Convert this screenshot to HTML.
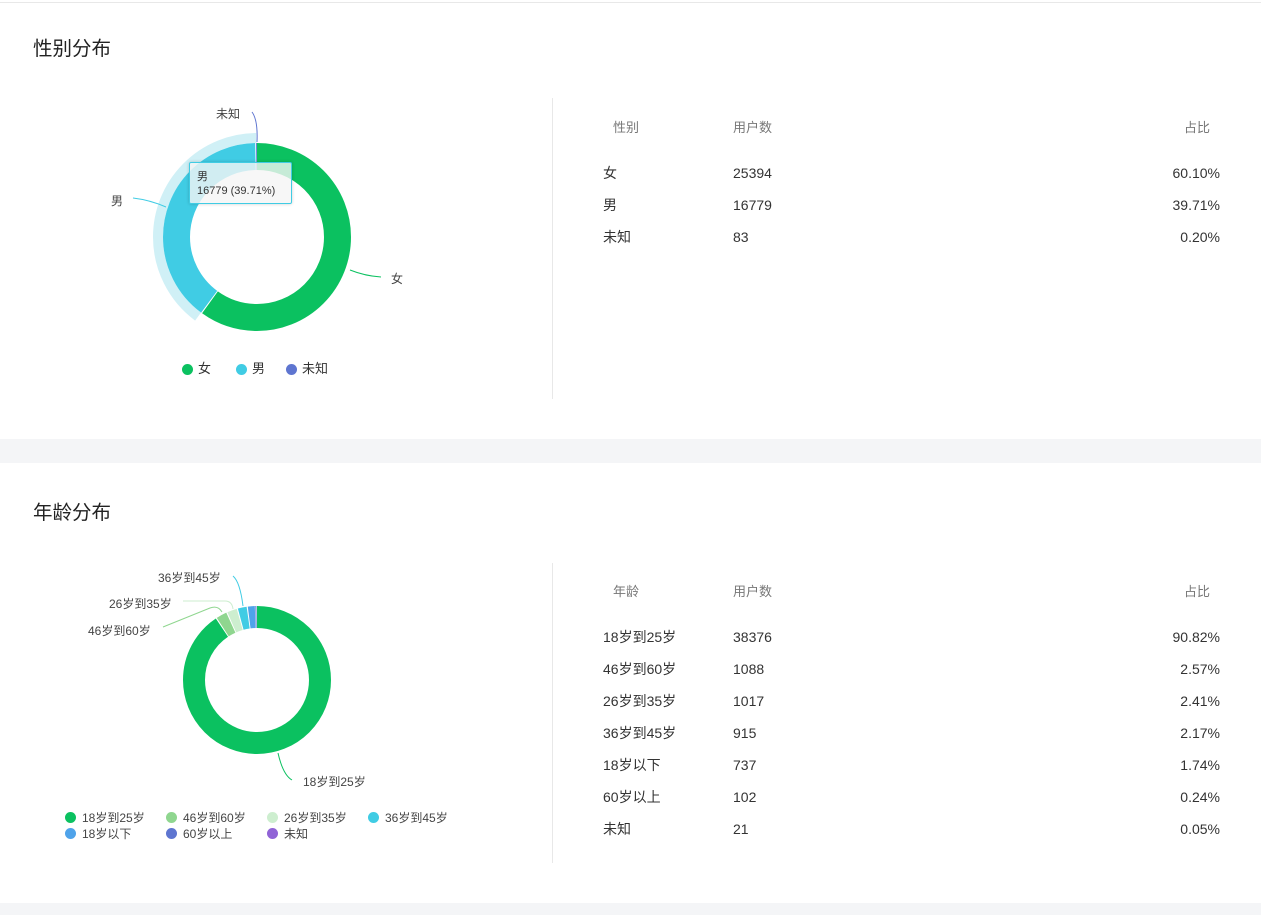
<!DOCTYPE html>
<html><head><meta charset="utf-8"><style>
*{margin:0;padding:0;box-sizing:border-box}
body{width:1261px;height:915px;background:#fff;position:relative;overflow:hidden;font-family:"Liberation Sans","Noto Sans CJK SC",sans-serif;color:#333}
.a{position:absolute;white-space:nowrap;line-height:16px}
.t{font-size:19.5px;color:#222;line-height:22px}
.h{font-size:13px;color:#777}
.d{font-size:14px;color:#333}
.r{text-align:right;width:100px}
.l{font-size:12px;color:#444}
.dot{position:absolute;width:11px;height:11px;border-radius:50%}
</style></head><body>
<div style="position:absolute;left:0;top:2px;width:1261px;height:1px;background:#e8e8e8"></div>
<div style="position:absolute;left:0;top:439px;width:1261px;height:24px;background:#f4f5f7"></div>
<div style="position:absolute;left:0;top:903px;width:1261px;height:12px;background:#f4f5f7"></div>
<div style="position:absolute;left:552px;top:98px;width:1px;height:301px;background:#e8e8e8"></div>
<div style="position:absolute;left:552px;top:563px;width:1px;height:300px;background:#e8e8e8"></div>

<div class="a t" style="left:33px;top:38px">性别分布</div>
<div class="a t" style="left:33px;top:502px">年龄分布</div>

<svg style="position:absolute;left:0;top:0" width="560" height="900">
 <g transform="rotate(-90 257 237)">
  <circle cx="257" cy="237" r="99" fill="none" stroke="#d0f0f6" stroke-width="10" stroke-dasharray="247 622" stroke-dashoffset="-374"/>
  <circle cx="257" cy="237" r="80.5" fill="none" stroke="#0bc160" stroke-width="27" stroke-dasharray="303 505.8"/>
  <circle cx="257" cy="237" r="80.5" fill="none" stroke="#40cce4" stroke-width="27" stroke-dasharray="200 505.8" stroke-dashoffset="-304"/>
  <circle cx="257" cy="237" r="80.5" fill="none" stroke="#5e75d0" stroke-width="27" stroke-dasharray="1 505.8" stroke-dashoffset="-504.8"/>
 </g>
 <path d="M350 270 Q365 276 381 277" stroke="#0bc160" fill="none"/>
 <path d="M166 207 Q150 200 133 198" stroke="#40cce4" fill="none"/>
 <path d="M257 142 Q258 120 252 112" stroke="#5e75d0" fill="none"/>
 <g transform="rotate(-90 257 680)" fill="none" stroke-width="22">
  <circle cx="257" cy="680" r="63" stroke="#0bc160" stroke-dasharray="358.5 395.84"/>
  <circle cx="257" cy="680" r="63" stroke="#8fd68f" stroke-dasharray="9.2 395.84" stroke-dashoffset="-359.5"/>
  <circle cx="257" cy="680" r="63" stroke="#cdeecf" stroke-dasharray="8.5 395.84" stroke-dashoffset="-369.7"/>
  <circle cx="257" cy="680" r="63" stroke="#40cce4" stroke-dasharray="7.6 395.84" stroke-dashoffset="-379.2"/>
  <circle cx="257" cy="680" r="63" stroke="#4fa3ea" stroke-dasharray="6 395.84" stroke-dashoffset="-387.8"/>
  <circle cx="257" cy="680" r="63" stroke="#5e75d0" stroke-dasharray="1 395.84" stroke-dashoffset="-394.2"/>
 </g>
 <path d="M278 753 Q283 775 292 780" stroke="#0bc160" fill="none"/>
 <path d="M222 612 Q218 605 210 608 L163 627" stroke="#8fd68f" fill="none"/>
 <path d="M233 609 Q232 601 225 601 L183 601" stroke="#cdeecf" fill="none"/>
 <path d="M243 606 Q240 582 233 576" stroke="#40cce4" fill="none"/>
</svg>

<div style="position:absolute;left:189px;top:162px;width:103px;height:42px;background:rgba(245,245,245,0.8);border:1px solid #40cce4;border-radius:2px;box-shadow:0 0 3px rgba(0,0,0,.2)"></div>
<div class="a" style="left:197px;top:170px;font-size:11px;line-height:14px;color:#333">男<br>16779 (39.71%)</div>

<div class="a l" style="left:391px;top:271px">女</div>
<div class="a l" style="left:111px;top:193px">男</div>
<div class="a l" style="left:216px;top:106px">未知</div>

<div class="dot" style="left:182px;top:364px;background:#0bc160"></div><div class="a d" style="left:198px;top:361px;font-size:13px">女</div>
<div class="dot" style="left:236px;top:364px;background:#40cce4"></div><div class="a d" style="left:252px;top:361px;font-size:13px">男</div>
<div class="dot" style="left:286px;top:364px;background:#5e75d0"></div><div class="a d" style="left:302px;top:361px;font-size:13px">未知</div>

<div class="a l" style="left:303px;top:774px">18岁到25岁</div>
<div class="a l" style="left:88px;top:623px">46岁到60岁</div>
<div class="a l" style="left:109px;top:596px">26岁到35岁</div>
<div class="a l" style="left:158px;top:570px">36岁到45岁</div>

<div class="dot" style="left:65px;top:812px;background:#0bc160"></div><div class="a l" style="left:82px;top:810px">18岁到25岁</div>
<div class="dot" style="left:166px;top:812px;background:#8fd68f"></div><div class="a l" style="left:183px;top:810px">46岁到60岁</div>
<div class="dot" style="left:267px;top:812px;background:#cdeecf"></div><div class="a l" style="left:284px;top:810px">26岁到35岁</div>
<div class="dot" style="left:368px;top:812px;background:#40cce4"></div><div class="a l" style="left:385px;top:810px">36岁到45岁</div>
<div class="dot" style="left:65px;top:828px;background:#4fa3ea"></div><div class="a l" style="left:82px;top:826px">18岁以下</div>
<div class="dot" style="left:166px;top:828px;background:#5e75d0"></div><div class="a l" style="left:183px;top:826px">60岁以上</div>
<div class="dot" style="left:267px;top:828px;background:#9063d6"></div><div class="a l" style="left:284px;top:826px">未知</div>

<div class="a h" style="left:613px;top:120px">性别</div>
<div class="a h" style="left:733px;top:120px">用户数</div>
<div class="a h r" style="left:1110px;top:120px">占比</div>
<div class="a d" style="left:603px;top:165px">女</div><div class="a d" style="left:733px;top:165px">25394</div><div class="a d r" style="left:1120px;top:165px">60.10%</div>
<div class="a d" style="left:603px;top:197px">男</div><div class="a d" style="left:733px;top:197px">16779</div><div class="a d r" style="left:1120px;top:197px">39.71%</div>
<div class="a d" style="left:603px;top:229px">未知</div><div class="a d" style="left:733px;top:229px">83</div><div class="a d r" style="left:1120px;top:229px">0.20%</div>

<div class="a h" style="left:613px;top:584px">年龄</div>
<div class="a h" style="left:733px;top:584px">用户数</div>
<div class="a h r" style="left:1110px;top:584px">占比</div>
<div class="a d" style="left:603px;top:629px">18岁到25岁</div><div class="a d" style="left:733px;top:629px">38376</div><div class="a d r" style="left:1120px;top:629px">90.82%</div>
<div class="a d" style="left:603px;top:661px">46岁到60岁</div><div class="a d" style="left:733px;top:661px">1088</div><div class="a d r" style="left:1120px;top:661px">2.57%</div>
<div class="a d" style="left:603px;top:693px">26岁到35岁</div><div class="a d" style="left:733px;top:693px">1017</div><div class="a d r" style="left:1120px;top:693px">2.41%</div>
<div class="a d" style="left:603px;top:725px">36岁到45岁</div><div class="a d" style="left:733px;top:725px">915</div><div class="a d r" style="left:1120px;top:725px">2.17%</div>
<div class="a d" style="left:603px;top:757px">18岁以下</div><div class="a d" style="left:733px;top:757px">737</div><div class="a d r" style="left:1120px;top:757px">1.74%</div>
<div class="a d" style="left:603px;top:789px">60岁以上</div><div class="a d" style="left:733px;top:789px">102</div><div class="a d r" style="left:1120px;top:789px">0.24%</div>
<div class="a d" style="left:603px;top:821px">未知</div><div class="a d" style="left:733px;top:821px">21</div><div class="a d r" style="left:1120px;top:821px">0.05%</div>
</body></html>
